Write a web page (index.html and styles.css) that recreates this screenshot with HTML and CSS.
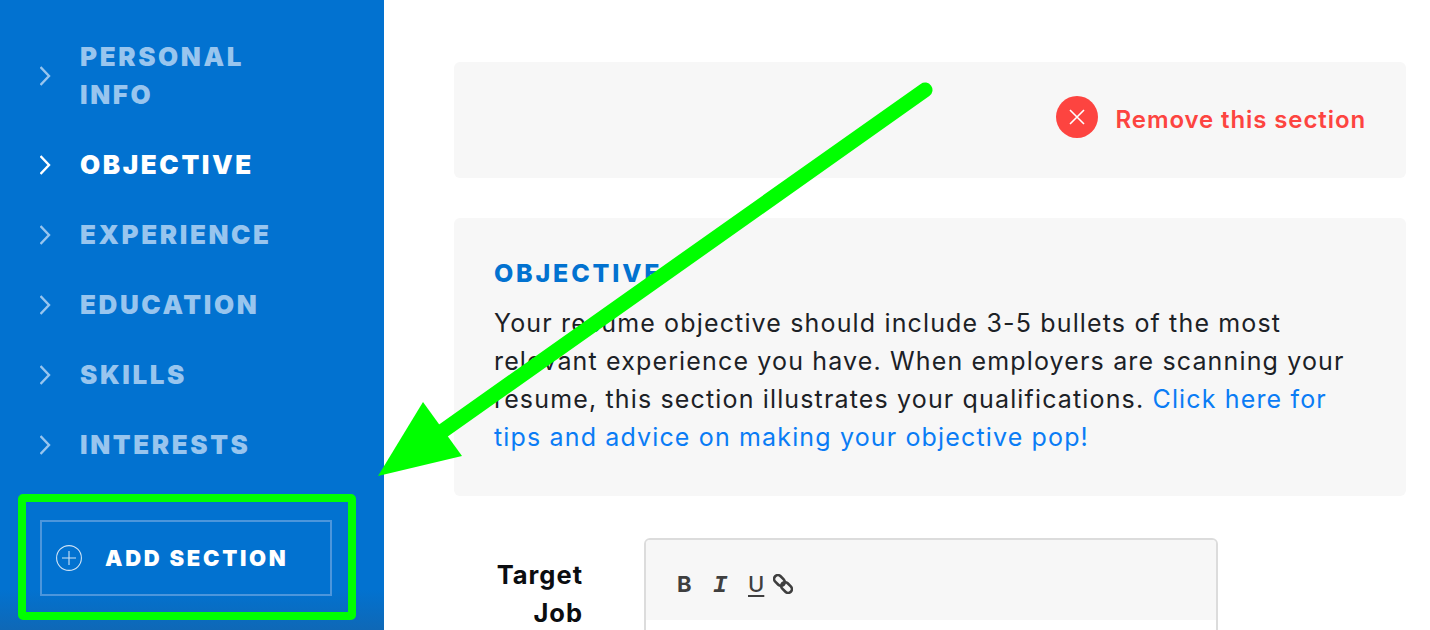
FILE: index.html
```html
<!DOCTYPE html>
<html lang="en">
<head>
<meta charset="utf-8">
<title>Resume builder</title>
<link rel="stylesheet" href="styles.css">
</head>
<body>
<div class="app">
  <aside class="sidebar">
    <nav class="nav">
      <a class="nav-item"><svg class="chev" viewBox="0 0 11 20"><path d="M.5 1l8.5 9-8.500 9"/></svg><span class="nav-label">PERSONAL<br>INFO</span></a>
      <a class="nav-item active"><svg class="chev" viewBox="0 0 11 20"><path d="M.5 1l8.5 9-8.500 9"/></svg><span class="nav-label">OBJECTIVE</span></a>
      <a class="nav-item"><svg class="chev" viewBox="0 0 11 20"><path d="M.5 1l8.5 9-8.500 9"/></svg><span class="nav-label">EXPERIENCE</span></a>
      <a class="nav-item"><svg class="chev" viewBox="0 0 11 20"><path d="M.5 1l8.5 9-8.500 9"/></svg><span class="nav-label">EDUCATION</span></a>
      <a class="nav-item"><svg class="chev" viewBox="0 0 11 20"><path d="M.5 1l8.5 9-8.500 9"/></svg><span class="nav-label">SKILLS</span></a>
      <a class="nav-item"><svg class="chev" viewBox="0 0 11 20"><path d="M.5 1l8.5 9-8.500 9"/></svg><span class="nav-label">INTERESTS</span></a>
    </nav>
    <button class="add-btn">
      <svg class="plus" viewBox="0 0 26 26"><circle cx="13" cy="13" r="12.4"/><path d="M13 6v14M6 13h14"/></svg>
      <span>ADD SECTION</span>
    </button>
  </aside>
  <main class="main">
    <section class="card remove-card">
      <a class="remove">
        <span class="remove-icon"><svg viewBox="0 0 18 18"><path d="M2 2l14 14M16 2L2 16"/></svg></span>
        <span class="remove-text">Remove this section</span>
      </a>
    </section>
    <section class="card info-card">
      <h2 class="info-title">OBJECTIVE</h2>
      <p class="info-text">Your resume objective should include 3-5 bullets of the most relevant experience you have. When employers are scanning your resume, this section illustrates your qualifications. <a class="info-link">Click here for tips and advice on making your objective pop!</a></p>
    </section>
    <div class="field">
      <label class="field-label">Target Job</label>
      <div class="editor">
        <div class="toolbar">
          <span class="tool tool-b">B</span>
          <span class="tool tool-i">I</span>
          <span class="tool tool-u">U</span>
          <svg class="tool-link" viewBox="0 0 20 20"><g transform="rotate(45 10 10)"><rect x="-1" y="6.2" width="12" height="7.6" rx="3.8"/><rect x="9" y="6.2" width="12" height="7.6" rx="3.8"/></g></svg>
        </div>
      </div>
    </div>
  </main>
</div>
<svg class="annotation" viewBox="0 0 1430 630">
  <path class="arrow-shaft" d="M925 90L430 440"/>
  <path class="arrow-head" d="M378 476L423 402L462 456Z"/>
  <rect class="anno-box" x="22" y="498" width="330" height="118" rx="1"/>
</svg>
</body>
</html>
```
FILE: styles.css
```css
* { box-sizing: border-box; }
html, body { margin: 0; height: 630px; overflow: hidden; background: #fff; }
body { font-family: "Inter", "Liberation Sans", sans-serif; position: relative; }
.app { display: flex; height: 630px; }
.sidebar {
  width: 384px; flex: none; padding: 38px 0 0 40px;
  background: linear-gradient(to bottom, #0272d0 0, #0272d0 590px, #0f68b6 630px);
}
.nav { display: flex; flex-direction: column; gap: 32px; }
.nav-item { display: flex; align-items: center; color: #98c5ee; }
.nav-item.active { color: #fff; }
.chev { width: 11px; height: 20px; flex: none; fill: none; stroke: currentColor; stroke-width: 2.4; }
.nav-label { margin-left: 29px; font-size: 26px; line-height: 38px; font-weight: 900; letter-spacing: 2.6px; }
.add-btn {
  display: flex; align-items: center; width: 292px; height: 76px; margin-top: 56px; padding: 0 0 0 14px;
  background: transparent; border: 2px solid #4c96dc; color: #fff; font: inherit;
  font-size: 22px; font-weight: 900; letter-spacing: 2.7px;
}
.plus { width: 26px; height: 26px; flex: none; margin-right: 23px; fill: none; stroke: #cfe3f6; stroke-width: 1.1; }
.main { flex: 1; padding: 62px 24px 0 70px; }
.card { background: #f7f7f7; border-radius: 6px; }
.remove-card { display: flex; align-items: center; justify-content: flex-end; height: 116px; padding: 0 40px 6px 0; }
.remove { display: flex; align-items: center; gap: 18px; color: #fd4440; font-size: 24px; font-weight: 600; letter-spacing: .9px; }
.remove-text { margin-top: 4px; }
.remove-icon { display: flex; align-items: center; justify-content: center; width: 42px; height: 42px; border-radius: 50%; background: #fd4440; }
.remove-icon svg { width: 18px; height: 18px; fill: none; stroke: #fff; stroke-width: 1.6; }
.info-card { height: 278px; margin-top: 40px; padding: 38px 40px 0; }
.info-title { margin: 0 0 14px; color: #0272d0; font-size: 25px; line-height: 34px; font-weight: 800; letter-spacing: 2.8px; }
.info-text { margin: 0; width: 860px; color: #1c2126; font-size: 25px; line-height: 38px; letter-spacing: 1.15px; }
.info-link { color: #0a7cf5; }
.field { display: flex; margin-top: 42px; }
.field-label { width: 129px; margin-top: 18px; color: #0b0d10; font-size: 25.5px; line-height: 38px; font-weight: 700; letter-spacing: 1px; text-align: right; }
.editor { width: 574px; height: 140px; margin-left: 61px; border: 2px solid #dcdcdc; border-radius: 6px 6px 0 0; background: #fff; }
.toolbar { display: flex; align-items: center; height: 80px; padding: 8px 0 0 31px; background: #f7f7f7; border-radius: 4px 4px 0 0; color: #3f3f3f; font-size: 22px; font-weight: 700; }
.tool { display: block; line-height: 24px; }
.tool-b { width: 36px; }
.tool-i { width: 35px; padding-top: 3px; font-size: 24px; font-style: italic; font-family: "Liberation Mono", monospace; }
.tool-u { width: 25px; text-decoration: underline; text-underline-offset: 3px; font-weight: 500; }
.tool-link { width: 20px; height: 20px; fill: none; stroke: #3f3f3f; stroke-width: 2.6; }
.annotation { position: absolute; left: 0; top: 0; width: 1430px; height: 630px; pointer-events: none; }
.arrow-shaft { fill: none; stroke: #00ff00; stroke-width: 15; stroke-linecap: round; }
.arrow-head { fill: #00ff00; }
.anno-box { fill: none; stroke: #00ff00; stroke-width: 8; }
```
